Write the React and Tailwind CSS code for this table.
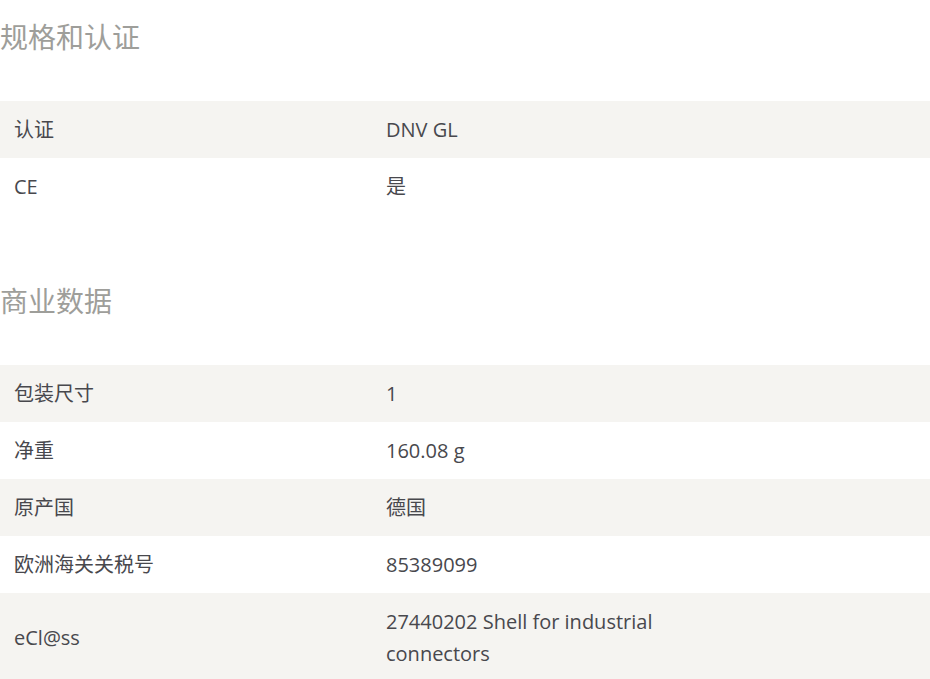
const sections = [
  {
    title: '规格和认证',
    rows: [
      ['认证', 'DNV GL'],
      ['CE', '是'],
    ],
  },
  {
    title: '商业数据',
    rows: [
      ['包装尺寸', '1'],
      ['净重', '160.08 g'],
      ['原产国', '德国'],
      ['欧洲海关关税号', '85389099'],
      ['eCl@ss', '27440202 Shell for industrial connectors'],
    ],
  },
]

export default function App() {
  return (
    <div
      className="bg-white w-[930px] pt-[17px] text-[#48484d]"
      style={{ fontFamily: '"Open Sans", "Noto Sans CJK SC", sans-serif' }}
    >
      {sections.map((s, i) => (
        <section key={i} className={i > 0 ? 'mt-[66px]' : ''}>
          <h2 className="text-[28px] leading-[40px] font-normal text-[#9e9e9a] mb-[44px]">{s.title}</h2>
          <table className="w-full border-collapse text-[20px]">
            <tbody>
              {s.rows.map(([k, v], j) => (
                <tr key={j} className={j % 2 === 0 ? 'bg-[#f5f4f1]' : 'bg-white'}>
                  <td className="w-[386px] pl-[14px] py-[12.5px] leading-8 align-middle">{k}</td>
                  <td className="py-[12.5px] leading-8 align-middle pr-[260px]">{v}</td>
                </tr>
              ))}
            </tbody>
          </table>
        </section>
      ))}
    </div>
  )
}
